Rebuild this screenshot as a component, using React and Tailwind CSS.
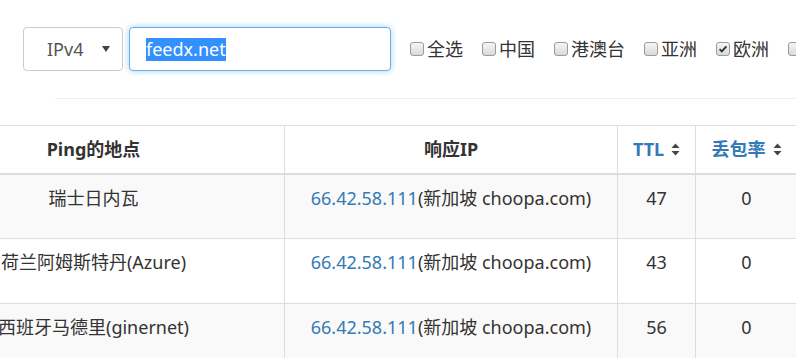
import React from "react";

const font = { fontFamily: '"Noto Sans", "Noto Sans CJK SC", sans-serif' };

function Box({ checked }) {
    return (
        <span className="relative inline-block w-[14px] h-[14px] rounded-[3px] border border-[#9a9a9a] bg-gradient-to-b from-[#f6f6f6] to-[#d9d9d9] shrink-0">
            {checked && (
                <svg viewBox="0 0 14 14" className="absolute inset-0 w-full h-full">
                    <path d="M3 7.2 L5.6 9.8 L11 3.8" fill="none" stroke="#333" strokeWidth="2.2" />
                </svg>
            )}
        </span>
    );
}

function SortIcon() {
    return (
        <svg width="9" height="13" viewBox="0 0 9 13" className="inline-block ml-[7px] -mt-[2px]">
            <path d="M4.5 0.5 L8.5 5 L0.5 5 Z" fill="#444" />
            <path d="M4.5 12.5 L8.5 8 L0.5 8 Z" fill="#444" />
        </svg>
    );
}

const regions = [
    { name: "全选", checked: false },
    { name: "中国", checked: false },
    { name: "港澳台", checked: false },
    { name: "亚洲", checked: false },
    { name: "欧洲", checked: true },
    { name: "美洲", checked: false },
];

const rows = [
    { place: "瑞士日内瓦", ttl: 47, loss: 0 },
    { place: "荷兰阿姆斯特丹(Azure)", ttl: 43, loss: 0 },
    { place: "西班牙马德里(ginernet)", ttl: 56, loss: 0 },
];

export default function App() {
    return (
        <div className="w-[796px] h-[358px] overflow-hidden bg-white text-[#333] text-[18px]" style={font}>
            {/* 查询表单 */}
            <div className="flex items-start pt-[27px] pl-[23px] h-[98px] w-[1000px]">
                <div className="flex items-center shrink-0 w-[100px] h-[44px] border border-[#ccc] rounded-[4px] pl-[23px] pr-[12px] text-[#555]">
                    <span className="flex-1">IPv4</span>
                    <svg width="8" height="6" viewBox="0 0 8 6">
                        <path d="M0 0 L8 0 L4 6 Z" fill="#444" />
                    </svg>
                </div>
                <div className="ml-[6px] shrink-0 flex items-center w-[262px] h-[44px] border border-[#66afe9] rounded-[4px] pl-[16px] shadow-[0_0_6px_rgba(102,175,233,0.6)]">
                    <span className="bg-[#3390ff] text-white leading-[23px]">feedx.net</span>
                </div>
                <div className="flex items-center ml-[19px] h-[44px] shrink-0">
                    {regions.map((r) => (
                        <label key={r.name} className="flex items-center mr-[19px] shrink-0">
                            <Box checked={r.checked} />
                            <span className="ml-[3px]">{r.name}</span>
                        </label>
                    ))}
                </div>
            </div>
            <div className="ml-[55px] border-t border-[#eee] h-[27px]" />

            {/* 结果表格 */}
            <table className="table-fixed border-collapse ml-[-98px] w-[895px]">
                <colgroup>
                    <col className="w-[382px]" />
                    <col className="w-[333px]" />
                    <col className="w-[78px]" />
                    <col className="w-[102px]" />
                </colgroup>
                <thead>
                    <tr className="h-[48px] font-bold">
                        <th className="border border-[#ddd] border-b-2 text-center">Ping的地点</th>
                        <th className="border border-[#ddd] border-b-2 text-center">响应IP</th>
                        <th className="border border-[#ddd] border-b-2 text-center text-[#337ab7]">
                            TTL<SortIcon />
                        </th>
                        <th className="border border-[#ddd] border-b-2 text-center text-[#337ab7]">
                            丢包率<SortIcon />
                        </th>
                    </tr>
                </thead>
                <tbody>
                    {rows.map((row, i) => (
                        <tr key={row.place} className={i % 2 === 0 ? "bg-[#f9f9f9] h-[65px]" : "bg-white h-[65px]"}>
                            <td className="border border-[#ddd] text-center align-top pt-[10px]">{row.place}</td>
                            <td className="border border-[#ddd] text-center align-top pt-[10px]">
                                <span className="text-[#337ab7]">66.42.58.111</span>(新加坡 choopa.com)
                            </td>
                            <td className="border border-[#ddd] text-center align-top pt-[10px]">{row.ttl}</td>
                            <td className="border border-[#ddd] text-center align-top pt-[10px]">{row.loss}</td>
                        </tr>
                    ))}
                </tbody>
            </table>
        </div>
    );
}
